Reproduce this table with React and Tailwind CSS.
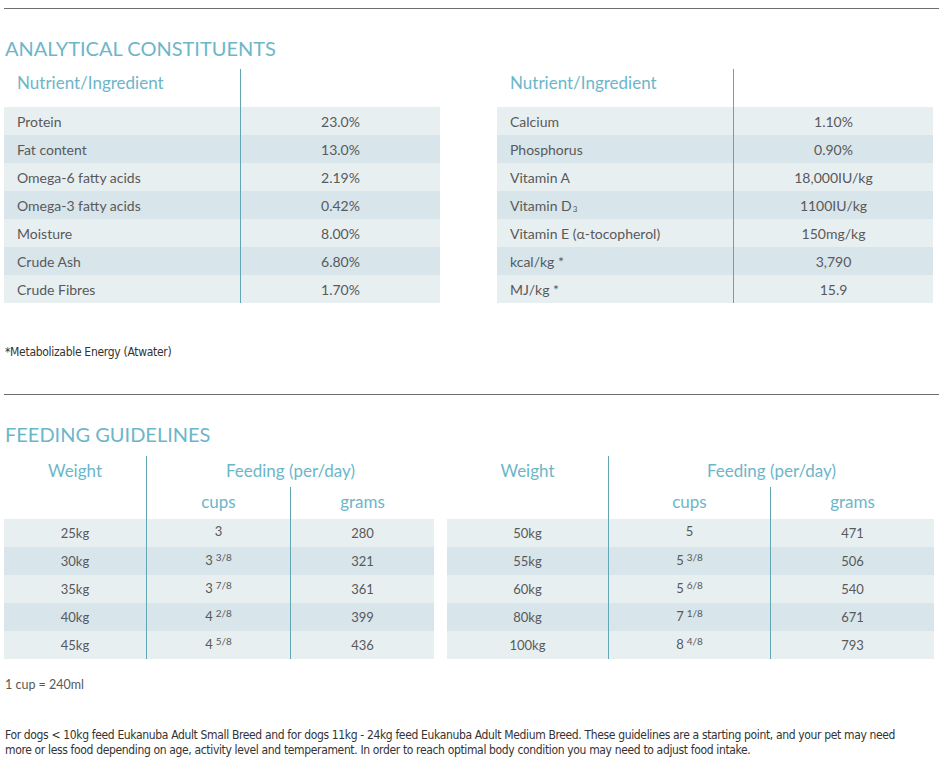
import React from 'react';

const teal = 'text-[#6cb6ca]';

const analyticLeft = [
  ['Protein', '23.0%'],
  ['Fat content', '13.0%'],
  ['Omega-6 fatty acids', '2.19%'],
  ['Omega-3 fatty acids', '0.42%'],
  ['Moisture', '8.00%'],
  ['Crude Ash', '6.80%'],
  ['Crude Fibres', '1.70%'],
];

const analyticRight = [
  ['Calcium', '1.10%'],
  ['Phosphorus', '0.90%'],
  ['Vitamin A', '18,000IU/kg'],
  [<>Vitamin D<span className="text-[8px] relative top-[4px] ml-px">3</span></>, '1100IU/kg'],
  ['Vitamin E (α-tocopherol)', '150mg/kg'],
  ['kcal/kg *', '3,790'],
  ['MJ/kg *', '15.9'],
];

const feedLeft = [
  ['25kg', '3', '', '280'],
  ['30kg', '3', '3/8', '321'],
  ['35kg', '3', '7/8', '361'],
  ['40kg', '4', '2/8', '399'],
  ['45kg', '4', '5/8', '436'],
];

const feedRight = [
  ['50kg', '5', '', '471'],
  ['55kg', '5', '3/8', '506'],
  ['60kg', '5', '6/8', '540'],
  ['80kg', '7', '1/8', '671'],
  ['100kg', '8', '4/8', '793'],
];

const rowBg = (i) => (i % 2 === 0 ? 'bg-[#e8eff1]' : 'bg-[#d8e5ea]');

const AnalyticTable = ({ rows, colW, width }) => (
  <div className={width}>
    <div className="flex h-[38px]">
      <div className={`${colW} border-r border-[#62a5b5] pl-[13px] pt-[3px] text-[17px] leading-[22px] ${teal}`}>
        Nutrient/Ingredient
      </div>
      <div className="flex-1" />
    </div>
    {rows.map((r, i) => (
      <div key={i} className={`flex h-[28px] ${rowBg(i)}`}>
        <div className={`${colW} border-r border-[#62a5b5] pl-[13px] flex items-center text-[14px]`}>{r[0]}</div>
        <div className="flex-1 flex items-center justify-center text-[14px]">{r[1]}</div>
      </div>
    ))}
  </div>
);

const Cups = ({ whole, frac }) => (
  <span className="-translate-y-[2px] inline-block">
    {whole}
    {frac && <span className="text-[10px] align-[4px] ml-[3px]">{frac}</span>}
  </span>
);

const FeedTable = ({ rows, width, c1, c2 }) => (
  <div className={width}>
    <div className="flex h-[63px]">
      <div className={`${c1} border-r border-[#62a5b5] text-center pt-[4px] text-[17px] leading-[22px] ${teal}`}>Weight</div>
      <div className="flex-1 flex flex-col">
        <div className={`h-[31px] text-center pt-[4px] text-[17px] leading-[22px] ${teal}`}>Feeding (per/day)</div>
        <div className="flex flex-1">
          <div className={`${c2} border-r border-[#62a5b5] text-center pt-[4px] text-[17px] leading-[22px] ${teal}`}>cups</div>
          <div className={`flex-1 text-center pt-[4px] text-[17px] leading-[22px] ${teal}`}>grams</div>
        </div>
      </div>
    </div>
    {rows.map((r, i) => (
      <div key={i} className={`flex h-[28px] text-[13px] ${rowBg(i)}`}>
        <div className={`${c1} border-r border-[#62a5b5] flex items-center justify-center pt-[2px]`}>{r[0]}</div>
        <div className={`${c2} border-r border-[#62a5b5] flex items-center justify-center pt-[2px]`}>
          <Cups whole={r[1]} frac={r[2]} />
        </div>
        <div className="flex-1 flex items-center justify-center pt-[2px]">{r[3]}</div>
      </div>
    ))}
  </div>
);

export default function App() {
  return (
    <div className="w-[939px] h-[765px] bg-white pt-2 font-['Lato',sans-serif] text-[#58595b] overflow-hidden">
      <div className="ml-1 h-px bg-[#6e6e6e]" />
      <h2 className={`mt-[28px] ml-[5px] text-[20px] leading-[22px] ${teal}`}>ANALYTICAL CONSTITUENTS</h2>
      <div className="flex ml-1 mt-[10px] gap-[57px]">
        <AnalyticTable rows={analyticLeft} colW="w-[237px]" width="w-[436px]" />
        <AnalyticTable rows={analyticRight} colW="w-[237px]" width="w-[436px]" />
      </div>
      <p className="mt-[41px] ml-[5px] text-[12px] leading-[16px] tracking-[-0.3px] font-['DejaVu_Sans_Condensed',sans-serif] text-[#333]">
        *Metabolizable Energy (Atwater)
      </p>
      <div className="mt-[34px] ml-1 h-px bg-[#6e6e6e]" />
      <h2 className={`mt-[28px] ml-[5px] text-[20px] leading-[22px] ${teal}`}>FEEDING GUIDELINES</h2>
      <div className="flex ml-1 mt-[11px] gap-[13px]">
        <FeedTable rows={feedLeft} width="w-[430px]" c1="w-[143px]" c2="w-[144px]" />
        <FeedTable rows={feedRight} width="w-[487px]" c1="w-[162px]" c2="w-[162px]" />
      </div>
      <p className="mt-[18px] ml-[5px] text-[12.5px] leading-[16px] text-[#58595b]">1 cup = 240ml</p>
      <p className="mt-[35px] ml-[5px] w-[905px] text-[12px] leading-[15px] tracking-[-0.35px] font-['DejaVu_Sans_Condensed',sans-serif] text-[#333]">
        For dogs &lt; 10kg feed Eukanuba Adult Small Breed and for dogs 11kg - 24kg feed Eukanuba Adult Medium Breed. These guidelines are a starting point, and your pet may need more or less food depending on age, activity level and temperament. In order to reach optimal body condition you may need to adjust food intake.
      </p>
    </div>
  );
}
